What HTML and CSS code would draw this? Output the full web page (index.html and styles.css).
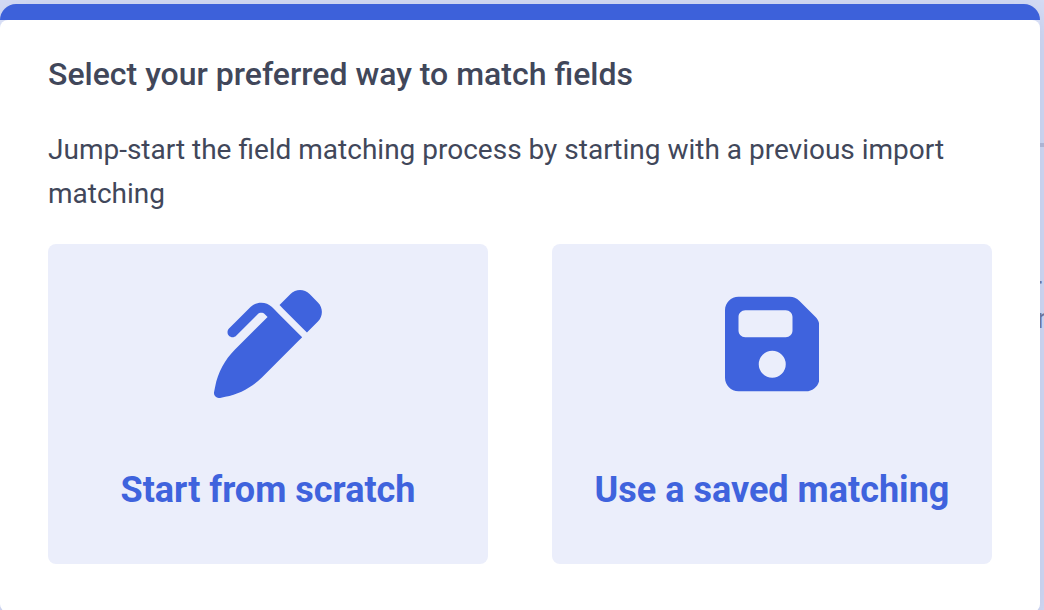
FILE: index.html
```
<!DOCTYPE html>
<html lang="en">
<head>
    <meta charset="UTF-8">
    <meta name="viewport" content="width=device-width, initial-scale=1.0">
    <title>Match fields</title>
    <link rel="stylesheet" href="styles.css">
</head>
<body>
    <div class="page-behind" aria-hidden="true">
        <div class="behind-line"></div>
        <span class="behind-text first">r</span>
        <span class="behind-text second">n</span>
    </div>
    <div class="modal" role="dialog" aria-labelledby="modal-title">
        <div class="modal-bar"></div>
        <div class="modal-body">
            <h1 id="modal-title">Select your preferred way to match fields</h1>
            <p>Jump-start the field matching process by starting with a previous import matching</p>
            <div class="options">
                <button type="button" class="option">
                    <svg class="icon" viewBox="0 0 512 512" aria-hidden="true">
                        <path d="M453.3 19.3l39.4 39.4c25 25 25 65.5 0 90.5l-52.1 52.1-1-1-16-16-96-96-17-17 52.1-52.1c25-25 65.5-25 90.5 0zM241 114.9c-9.4-9.4-24.6-9.4-33.9 0L105 217c-9.4 9.4-24.6 9.4-33.9 0s-9.4-24.6 0-33.9L173.1 81c28.1-28.1 73.7-28.1 101.8 0L288 94.1l17 17 96 96 16 16 1 1-17 17L229.5 412.5c-48 48-109.2 80.8-175.8 94.1l-25 5c-7.9 1.6-16-.9-21.7-6.6s-8.1-13.8-6.6-21.7l5-25c13.3-66.6 46.1-127.8 94.1-175.8L254.1 128 241 114.9z"/>
                    </svg>
                    <span>Start from scratch</span>
                </button>
                <button type="button" class="option">
                    <svg class="icon" viewBox="0 0 448 512" aria-hidden="true">
                        <path d="M64 32C28.7 32 0 60.7 0 96V416c0 35.3 28.7 64 64 64H384c35.3 0 64-28.7 64-64V173.3c0-17-6.7-33.3-18.7-45.3L352 50.7C340 38.7 323.7 32 306.7 32H64zm0 96c0-17.7 14.3-32 32-32H288c17.7 0 32 14.3 32 32v64c0 17.7-14.3 32-32 32H96c-17.7 0-32-14.3-32-32V128zM224 288a64 64 0 1 1 0 128 64 64 0 1 1 0-128z"/>
                    </svg>
                    <span>Use a saved matching</span>
                </button>
            </div>
        </div>
    </div>
</body>
</html>
```
FILE: styles.css
```
* {
    box-sizing: border-box;
}
body {
    margin: 0;
    padding: 4px 4px 0 0;
    font-family: Roboto, sans-serif;
    color: #41475a;
    background-color: #d6ddf5;
    overflow: hidden;
}
/* what shows of the page behind the modal */
.page-behind {
    position: absolute;
    top: 0;
    right: 0;
    bottom: 0;
    width: 24px;
    overflow: hidden;
}
.behind-line {
    position: absolute;
    top: 143px;
    width: 100%;
    height: 4px;
    background-color: #b8bdd8;
}
.behind-text {
    position: absolute;
    font-size: 28px;
    line-height: 36px;
    color: #6f799e;
}
.first {
    top: 269px;
    right: 2px;
}
.second {
    top: 301px;
    left: 17px;
}
.modal {
    position: relative;
    border-radius: 16px 16px 8px 8px;
    box-shadow: 0 8px 32px rgba(70, 85, 160, 0.2);
}
.modal-bar {
    height: 16px;
    border-radius: 16px 16px 0 0;
    background-color: #3d61da;
}
.modal-body {
    padding: 32px 48px 48px;
    border-radius: 8px;
    background-color: #fff;
}
h1 {
    margin: 0;
    font-size: 32px;
    font-weight: 500;
    line-height: 44px;
}
p {
    margin: 32px 0 28px;
    font-size: 28px;
    line-height: 44px;
}
.options {
    display: grid;
    grid-template-columns: 1fr 1fr;
    gap: 64px;
}
.option {
    display: flex;
    flex-direction: column;
    align-items: center;
    gap: 68px;
    padding: 46px 24px 50px;
    border: none;
    border-radius: 8px;
    font-family: inherit;
    font-size: 36px;
    font-weight: 700;
    line-height: 48px;
    color: #3f63dd;
    background-color: #ebeefb;
    cursor: pointer;
}
.option:hover {
    background-color: #dfe5f9;
}
.icon {
    height: 108px;
    fill: currentColor;
}
```
